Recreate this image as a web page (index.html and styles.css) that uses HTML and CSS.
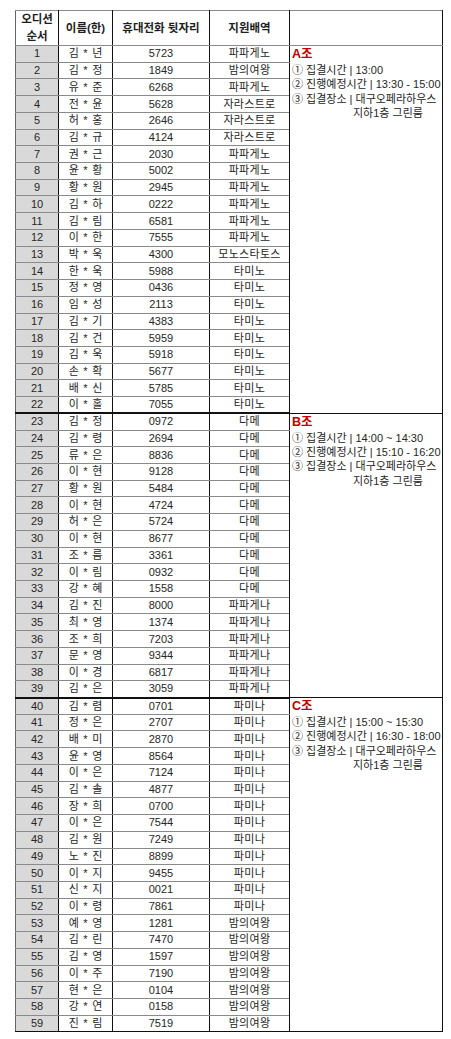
FILE: index.html
```html
<!DOCTYPE html>
<html lang="ko">
<head>
<meta charset="utf-8">
<title>오디션 순서</title>
<link rel="stylesheet" href="styles.css">
</head>
<body>
<table class="sheet">
<colgroup>
<col class="c1"><col class="c2"><col class="c3"><col class="c4"><col class="c5">
</colgroup>
<thead>
<tr class="head">
<th>오디션<br>순서</th><th>이름(한)</th><th>휴대전화 뒷자리</th><th>지원배역</th><th class="blank"></th>
</tr>
</thead>
<tbody>
<tr><td class="no">1</td><td>김 * 년</td><td>5723</td><td>파파게노</td>
<td class="note" rowspan="22"><div class="grp">A조</div>
<div>① 집결시간 | 13:00</div>
<div>② 진행예정시간 | 13:30 - 15:00</div>
<div>③ 집결장소 | 대구오페라하우스</div>
<div class="sub">지하1층 그린룸</div></td></tr>
<tr><td class="no">2</td><td>김 * 정</td><td>1849</td><td>밤의여왕</td></tr>
<tr><td class="no">3</td><td>유 * 준</td><td>6268</td><td>파파게노</td></tr>
<tr><td class="no">4</td><td>전 * 윤</td><td>5628</td><td>자라스트로</td></tr>
<tr><td class="no">5</td><td>허 * 홍</td><td>2646</td><td>자라스트로</td></tr>
<tr><td class="no">6</td><td>김 * 규</td><td>4124</td><td>자라스트로</td></tr>
<tr><td class="no">7</td><td>권 * 근</td><td>2030</td><td>파파게노</td></tr>
<tr><td class="no">8</td><td>윤 * 황</td><td>5002</td><td>파파게노</td></tr>
<tr><td class="no">9</td><td>황 * 원</td><td>2945</td><td>파파게노</td></tr>
<tr><td class="no">10</td><td>김 * 하</td><td>0222</td><td>파파게노</td></tr>
<tr><td class="no">11</td><td>김 * 림</td><td>6581</td><td>파파게노</td></tr>
<tr><td class="no">12</td><td>이 * 한</td><td>7555</td><td>파파게노</td></tr>
<tr><td class="no">13</td><td>박 * 욱</td><td>4300</td><td>모노스타토스</td></tr>
<tr><td class="no">14</td><td>한 * 욱</td><td>5988</td><td>타미노</td></tr>
<tr><td class="no">15</td><td>정 * 영</td><td>0436</td><td>타미노</td></tr>
<tr><td class="no">16</td><td>임 * 성</td><td>2113</td><td>타미노</td></tr>
<tr><td class="no">17</td><td>김 * 기</td><td>4383</td><td>타미노</td></tr>
<tr><td class="no">18</td><td>김 * 건</td><td>5959</td><td>타미노</td></tr>
<tr><td class="no">19</td><td>김 * 욱</td><td>5918</td><td>타미노</td></tr>
<tr><td class="no">20</td><td>손 * 확</td><td>5677</td><td>타미노</td></tr>
<tr><td class="no">21</td><td>배 * 신</td><td>5785</td><td>타미노</td></tr>
<tr class="end"><td class="no">22</td><td>이 * 홀</td><td>7055</td><td>타미노</td></tr>
<tr><td class="no">23</td><td>김 * 정</td><td>0972</td><td>다메</td>
<td class="note" rowspan="17"><div class="grp">B조</div>
<div>① 집결시간 | 14:00 ~ 14:30</div>
<div>② 진행예정시간 | 15:10 - 16:20</div>
<div>③ 집결장소 | 대구오페라하우스</div>
<div class="sub">지하1층 그린룸</div></td></tr>
<tr><td class="no">24</td><td>김 * 령</td><td>2694</td><td>다메</td></tr>
<tr><td class="no">25</td><td>류 * 은</td><td>8836</td><td>다메</td></tr>
<tr><td class="no">26</td><td>이 * 현</td><td>9128</td><td>다메</td></tr>
<tr><td class="no">27</td><td>황 * 원</td><td>5484</td><td>다메</td></tr>
<tr><td class="no">28</td><td>이 * 현</td><td>4724</td><td>다메</td></tr>
<tr><td class="no">29</td><td>허 * 은</td><td>5724</td><td>다메</td></tr>
<tr><td class="no">30</td><td>이 * 현</td><td>8677</td><td>다메</td></tr>
<tr><td class="no">31</td><td>조 * 름</td><td>3361</td><td>다메</td></tr>
<tr><td class="no">32</td><td>이 * 림</td><td>0932</td><td>다메</td></tr>
<tr><td class="no">33</td><td>강 * 혜</td><td>1558</td><td>다메</td></tr>
<tr><td class="no">34</td><td>김 * 진</td><td>8000</td><td>파파게나</td></tr>
<tr><td class="no">35</td><td>최 * 영</td><td>1374</td><td>파파게나</td></tr>
<tr><td class="no">36</td><td>조 * 희</td><td>7203</td><td>파파게나</td></tr>
<tr><td class="no">37</td><td>문 * 영</td><td>9344</td><td>파파게나</td></tr>
<tr><td class="no">38</td><td>이 * 경</td><td>6817</td><td>파파게나</td></tr>
<tr class="end"><td class="no">39</td><td>김 * 은</td><td>3059</td><td>파파게나</td></tr>
<tr><td class="no">40</td><td>김 * 렴</td><td>0701</td><td>파미나</td>
<td class="note" rowspan="20"><div class="grp">C조</div>
<div>① 집결시간 | 15:00 ~ 15:30</div>
<div>② 진행예정시간 | 16:30 - 18:00</div>
<div>③ 집결장소 | 대구오페라하우스</div>
<div class="sub">지하1층 그린룸</div></td></tr>
<tr><td class="no">41</td><td>정 * 은</td><td>2707</td><td>파미나</td></tr>
<tr><td class="no">42</td><td>배 * 미</td><td>2870</td><td>파미나</td></tr>
<tr><td class="no">43</td><td>윤 * 영</td><td>8564</td><td>파미나</td></tr>
<tr><td class="no">44</td><td>이 * 은</td><td>7124</td><td>파미나</td></tr>
<tr><td class="no">45</td><td>김 * 솔</td><td>4877</td><td>파미나</td></tr>
<tr><td class="no">46</td><td>장 * 희</td><td>0700</td><td>파미나</td></tr>
<tr><td class="no">47</td><td>이 * 은</td><td>7544</td><td>파미나</td></tr>
<tr><td class="no">48</td><td>김 * 원</td><td>7249</td><td>파미나</td></tr>
<tr><td class="no">49</td><td>노 * 진</td><td>8899</td><td>파미나</td></tr>
<tr><td class="no">50</td><td>이 * 지</td><td>9455</td><td>파미나</td></tr>
<tr><td class="no">51</td><td>신 * 지</td><td>0021</td><td>파미나</td></tr>
<tr><td class="no">52</td><td>이 * 령</td><td>7861</td><td>파미나</td></tr>
<tr><td class="no">53</td><td>예 * 영</td><td>1281</td><td>밤의여왕</td></tr>
<tr><td class="no">54</td><td>김 * 린</td><td>7470</td><td>밤의여왕</td></tr>
<tr><td class="no">55</td><td>김 * 영</td><td>1597</td><td>밤의여왕</td></tr>
<tr><td class="no">56</td><td>이 * 주</td><td>7190</td><td>밤의여왕</td></tr>
<tr><td class="no">57</td><td>현 * 은</td><td>0104</td><td>밤의여왕</td></tr>
<tr><td class="no">58</td><td>강 * 연</td><td>0158</td><td>밤의여왕</td></tr>
<tr class="last"><td class="no">59</td><td>진 * 림</td><td>7519</td><td>밤의여왕</td></tr>
</tbody>
</table>
</body>
</html>
```
FILE: styles.css
```css
html, body {
  margin: 0;
  padding: 0;
  background: #ffffff;
}
body {
  padding: 10px 0 0 15px;
  font-family: "Liberation Sans", "Noto Sans CJK KR", sans-serif;
  color: #262626;
}
.sheet {
  border-collapse: collapse;
  table-layout: fixed;
  width: 427px;
  font-size: 11px;
  line-height: 1;
}
.c1 { width: 43px; }
.c2 { width: 54px; }
.c3 { width: 97px; }
.c4 { width: 80px; }
.c5 { width: 153px; }
.sheet th, .sheet td {
  border-left: 1px solid #111;
  border-right: 1px solid #111;
  border-top: 1px solid #8a8a8a;
  border-bottom: 1px solid #8a8a8a;
  padding: 0;
  text-align: center;
  vertical-align: middle;
  white-space: nowrap;
  overflow: hidden;
}
.head th {
  height: 32px;
  font-weight: bold;
  font-size: 11.5px;
  line-height: 17px;
  color: #1e1e1e;
}
.sheet th:first-child, .sheet td.no {
  border-left-color: #666;
}
tbody tr { height: 16.73px; }
tbody td:nth-child(2) { word-spacing: 1.5px; }
tbody td:nth-child(4) { letter-spacing: 0.3px; }
.no { background: #d9d9d9; }
tr.end td { border-bottom: 2px solid #111; }
tr.last td { border-bottom: 1px solid #111; }
.sheet td.note {
  text-align: left;
  vertical-align: top;
  padding: 0 0 0 2px;
  border-bottom: 2px solid #111;
  font-size: 11px;
  line-height: 14.3px;
  color: #262626;
  word-spacing: 0;
  letter-spacing: 0;
}
.sheet td.note:last-child { border-bottom-width: 1px; }
.grp {
  color: #c00000;
  font-weight: bold;
  font-size: 12.5px;
  line-height: 17px;
}
.sub { padding-left: 61px; }
```
